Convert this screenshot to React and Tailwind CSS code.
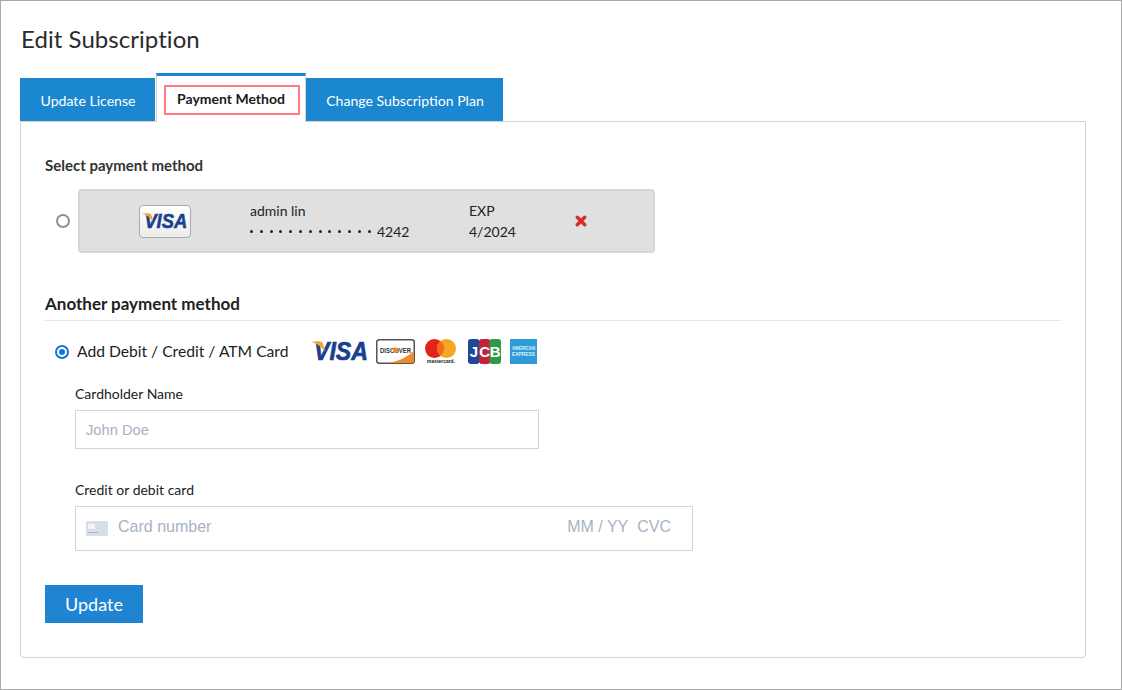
import React from 'react'

const lato = { fontFamily: 'Lato, sans-serif' }
const dots = Array.from({ length: 13 })

function VisaMark({ width, height }) {
  return (
    <svg width={width} height={height} viewBox="0 0 58 22" aria-hidden="true" className="overflow-visible">
      <text x="3" y="20" fontFamily="Liberation Sans" fontWeight="700" fontStyle="italic" fontSize="26" fill="#1a3f8f" stroke="#1a3f8f" strokeWidth="0.7" textLength="54" lengthAdjust="spacingAndGlyphs">VISA</text>
      <path d="M0 1.5 L9 1.5 C11 1.5 12 3 12.5 5 L14 12 C11 7 6 3.5 0 1.5 Z" fill="#f0a830" />
    </svg>
  )
}

function DiscoverMark() {
  return (
    <svg width="39" height="25" viewBox="0 0 39 25" aria-hidden="true" className="overflow-visible">
      <rect x="0.75" y="0.75" width="37.5" height="23.5" rx="2.5" fill="#fff" stroke="#555" strokeWidth="1.5" />
      <path d="M38 12 L38 22 Q38 24 36 24 L13 24 Q28 21 38 12 Z" fill="#ef8a2c" />
      <text x="4" y="13.5" fontFamily="Liberation Sans" fontWeight="700" fontSize="6.4" fill="#333" textLength="31" lengthAdjust="spacingAndGlyphs">DISCOVER</text>
      <circle cx="19.5" cy="11.2" r="2.6" fill="#ef8a2c" />
    </svg>
  )
}

function MastercardMark() {
  return (
    <svg width="33" height="25" viewBox="0 0 33 25" aria-hidden="true" className="overflow-visible">
      <circle cx="10.5" cy="9.5" r="9.5" fill="#e2231a" />
      <circle cx="22.5" cy="9.5" r="9.5" fill="#f5a623" />
      <path d="M16.5 2.1 A9.5 9.5 0 0 1 16.5 16.9 A9.5 9.5 0 0 1 16.5 2.1 Z" fill="#f26a1b" />
      <text x="3" y="24" fontFamily="Liberation Sans" fontWeight="700" fontSize="5.6" fill="#222" textLength="28" lengthAdjust="spacingAndGlyphs">mastercard.</text>
    </svg>
  )
}

function JcbMark() {
  return (
    <svg width="33" height="25" viewBox="0 0 33 25" aria-hidden="true" className="overflow-visible">
      <rect x="0" y="0" width="11.5" height="25" rx="3" fill="#1b4a96" />
      <rect x="11" y="0" width="11.5" height="25" rx="3" fill="#c8203a" />
      <rect x="21.5" y="0" width="11.5" height="25" rx="3" fill="#2f9a46" />
      <text x="5.8" y="18" textAnchor="middle" fontFamily="Liberation Sans" fontWeight="700" fontSize="15" fill="#fff">J</text>
      <text x="16.7" y="18" textAnchor="middle" fontFamily="Liberation Sans" fontWeight="700" fontSize="15" fill="#fff">C</text>
      <text x="27.2" y="18" textAnchor="middle" fontFamily="Liberation Sans" fontWeight="700" fontSize="15" fill="#fff">B</text>
    </svg>
  )
}

function AmexMark() {
  return (
    <svg width="27" height="25" viewBox="0 0 27 25" aria-hidden="true" className="overflow-visible">
      <rect width="27" height="25" fill="#2e9bd6" />
      <text x="2" y="11" fontFamily="Liberation Sans" fontWeight="700" fontSize="5" fill="#dff1fb" textLength="23" lengthAdjust="spacingAndGlyphs">AMERICAN</text>
      <text x="2" y="17" fontFamily="Liberation Sans" fontWeight="700" fontSize="5" fill="#dff1fb" textLength="23" lengthAdjust="spacingAndGlyphs">EXPRESS</text>
    </svg>
  )
}

function CardIcon() {
  return (
    <svg width="22" height="15" viewBox="0 0 22 15" aria-hidden="true" className="shrink-0 mt-[3px]">
      <rect width="22" height="15" rx="1.5" fill="#d8dee8" />
      <rect x="2" y="3" width="7" height="5" rx="0.5" fill="#f3f5f8" />
      <rect x="2" y="11" width="10" height="1" fill="#aab4c4" />
    </svg>
  )
}

function SavedCard() {
  return (
    <div className="flex items-center">
      <span className="ml-[11px] w-[14px] h-[14px] rounded-full border-2 border-[#8f8f9c] bg-white" />
      <div className="ml-[8px] w-[577px] h-[64px] flex items-center rounded-[4px] bg-[#e0e0e0] border-2 border-[#d6d6d6] text-[14px] leading-[20px] text-[#222]">
        <div className="ml-[59px] w-[52px] h-[33px] flex items-center justify-center rounded-[4px] border border-[#aaa] bg-gradient-to-b from-white to-[#ececec]">
          <VisaMark width={46} height={18} />
        </div>
        <div className="ml-[59px] w-[219px]">
          <div>admin lin</div>
          <div className="flex items-center mt-[1px]">
            <span className="flex gap-[6.8px] w-[127px]">
              {dots.map((_, i) => (
                <span key={i} className="w-[3px] h-[3px] rounded-full bg-[#222]" />
              ))}
            </span>
            <span>4242</span>
          </div>
        </div>
        <div className="w-[106px]">
          <div>EXP</div>
          <div className="mt-[1px]">4/2024</div>
        </div>
        <svg width="12" height="12" viewBox="0 0 12 12" aria-hidden="true">
          <path d="M2.3 2.3 L9.7 9.7 M9.7 2.3 L2.3 9.7" stroke="#d92b2b" strokeWidth="3.4" strokeLinecap="round" />
        </svg>
      </div>
    </div>
  )
}

export default function App() {
  return (
    <div style={lato} className="w-[1122px] h-[690px] border border-[#a9a9a9] bg-white pl-[19px] overflow-hidden text-[#222]">
      <h1 className="pt-[23px] h-[72px] text-[24px] leading-[30px] font-normal text-[#2b2b2b] pl-[1px] tracking-[0.05px]">Edit Subscription</h1>

      {/* Tabs */}
      <div className="flex items-end h-[48px] text-[14.1px]">
        <div className="w-[135px] h-[43px] pt-[2px] pl-[1px] bg-[#1b87d0] text-white flex items-center justify-center">Update License</div>
        <div className="relative z-10 ml-[1px] w-[150px] h-[49px] -mb-[1px] bg-white border-t-[3px] border-t-[#1b87d0] border-x border-x-[#d0d0d0] pt-[9px] pl-[7px]">
          <div className="w-[136px] h-[30px] pb-[3px] pr-[2px] border-2 border-[#ff7b7f] flex items-center justify-center font-bold text-[14px] text-[#1a1a1a]">Payment Method</div>
        </div>
        <div className="w-[197px] h-[43px] pt-[2px] pl-[1px] bg-[#1b87d0] text-white flex items-center justify-center">Change Subscription Plan</div>
      </div>

      {/* Panel */}
      <div className="w-[1066px] h-[537px] border border-[#d2d2d2] rounded-b-[4px] px-[24px] pt-[33px]">
        <div className="text-[15px] leading-[20px] font-bold text-[#333]">Select payment method</div>
        <div className="mt-[14px]"><SavedCard /></div>

        <div className="mt-[40px] w-[1016px] h-[28px] border-b border-[#e4e4e4] text-[17px] leading-[22px] font-bold text-[#222]">Another payment method</div>

        <div className="mt-[18px] flex items-center h-[26px]">
          <span className="ml-[10px] w-[14px] h-[14px] rounded-full border-2 border-[#1273d6] flex items-center justify-center">
            <span className="w-[6px] h-[6px] rounded-full bg-[#1273d6]" />
          </span>
          <span className="ml-[8px] text-[15.65px] text-[#222]">Add Debit / Credit / ATM Card</span>
          <span className="ml-[22px] mb-[2px] flex"><VisaMark width={58} height={22} /></span>
          <span className="ml-[7px] mb-[2px] flex"><DiscoverMark /></span>
          <span className="ml-[9px] mb-[2px] flex"><MastercardMark /></span>
          <span className="ml-[11px] mb-[2px] flex"><JcbMark /></span>
          <span className="ml-[9px] mb-[2px] flex"><AmexMark /></span>
        </div>

        <div className="ml-[30px]">
          <div className="mt-[20px] text-[14px] leading-[18px]">Cardholder Name</div>
          <div style={{ fontFamily: 'Liberation Sans, sans-serif' }} className="mt-[7px] w-[464px] h-[39px] border border-[#d4d4d4] flex items-center pl-[10px] pt-[1px] text-[14.7px] text-[#a6b3c4]">John Doe</div>

          <div className="mt-[32px] text-[14px] leading-[18px]">Credit or debit card</div>
          <div style={{ fontFamily: 'Liberation Sans, sans-serif' }} className="mt-[7px] w-[618px] h-[45px] border border-[#d4d4d4] flex items-center pl-[10px] pr-[21px] pb-[3px] text-[16px] text-[#a6b3c4]">
            <CardIcon />
            <span className="ml-[10px]">Card number</span>
            <span className="ml-auto">MM / YY</span>
            <span className="ml-[9px]">CVC</span>
          </div>
        </div>

        <button className="mt-[34px] w-[98px] h-[38px] bg-[#1f84d2] text-white text-[18px] flex items-center justify-center">Update</button>
      </div>
    </div>
  )
}
